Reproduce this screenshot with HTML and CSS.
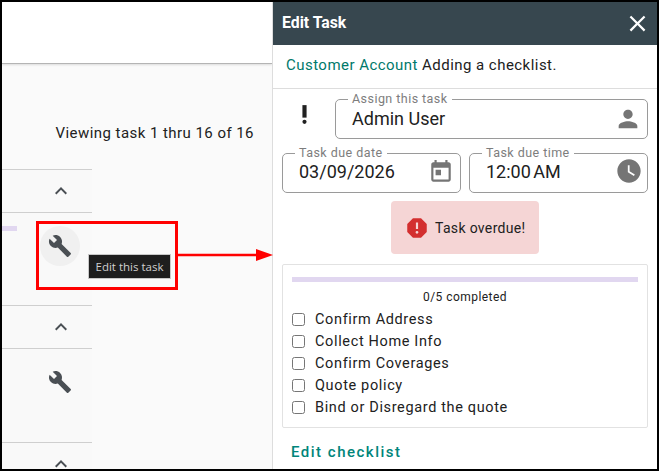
FILE: index.html
```html
<!DOCTYPE html>
<html lang="en">
<head>
<meta charset="utf-8">
<title>Edit Task</title>
<link rel="stylesheet" href="styles.css">
</head>
<body>
<div class="frame">
  <main class="main">
    <div class="topbar"></div>
    <p class="viewing">Viewing task 1 thru 16 of 16</p>
    <div class="tasks">
      <div class="row row-head">
        <svg class="icon chevron" viewBox="0 0 24 24"><path d="M12 8l-6 6 1.41 1.41L12 10.83l4.59 4.58L18 14z"/></svg>
      </div>
      <div class="row row-body">
        <span class="mini-progress"></span>
        <span class="wrench-btn is-hover">
          <svg class="icon wrench" viewBox="0 0 24 24"><path d="M22.7 19l-9.1-9.1c.9-2.3.4-5-1.5-6.9-2-2-5-2.4-7.4-1.3L9 6 6 9 1.6 4.7C.4 7.1.9 10.1 2.9 12.1c1.9 1.9 4.6 2.4 6.9 1.5l9.1 9.1c.4.4 1 .4 1.4 0l2.3-2.3c.5-.4.5-1.1.1-1.4z"/></svg>
        </span>
      </div>
      <div class="row row-head">
        <svg class="icon chevron" viewBox="0 0 24 24"><path d="M12 8l-6 6 1.41 1.41L12 10.83l4.59 4.58L18 14z"/></svg>
      </div>
      <div class="row row-body row-body-tall">
        <span class="wrench-btn">
          <svg class="icon wrench" viewBox="0 0 24 24"><path d="M22.7 19l-9.1-9.1c.9-2.3.4-5-1.5-6.9-2-2-5-2.4-7.4-1.3L9 6 6 9 1.6 4.7C.4 7.1.9 10.1 2.9 12.1c1.9 1.9 4.6 2.4 6.9 1.5l9.1 9.1c.4.4 1 .4 1.4 0l2.3-2.3c.5-.4.5-1.1.1-1.4z"/></svg>
        </span>
      </div>
      <div class="row row-head">
        <svg class="icon chevron" viewBox="0 0 24 24"><path d="M12 8l-6 6 1.41 1.41L12 10.83l4.59 4.58L18 14z"/></svg>
      </div>
    </div>
  </main>

  <aside class="panel">
    <header class="panel-head">
      <h1 class="panel-title">Edit Task</h1>
      <svg class="icon close" viewBox="0 0 24 24"><path d="M19 6.41L17.59 5 12 10.59 6.41 5 5 6.41 10.59 12 5 17.59 6.41 19 12 13.41 17.59 19 19 17.59 13.41 12z"/></svg>
    </header>
    <div class="subject"><span class="subject-link">Customer Account</span> Adding a checklist.</div>
    <div class="form">
      <div class="assign-row">
        <svg class="icon priority" viewBox="0 0 24 24"><circle cx="12" cy="19" r="2"/><path d="M10 3h4v12h-4z"/></svg>
        <fieldset class="field field-wide">
          <legend class="field-label">Assign this task</legend>
          <span class="field-value">Admin User</span>
          <svg class="icon field-icon person" viewBox="0 0 24 24"><path d="M12 12c2.21 0 4-1.79 4-4s-1.79-4-4-4-4 1.79-4 4 1.79 4 4 4zm0 2c-2.67 0-8 1.34-8 4v2h16v-2c0-2.66-5.33-4-8-4z"/></svg>
        </fieldset>
      </div>
      <div class="due-row">
        <fieldset class="field">
          <legend class="field-label">Task due date</legend>
          <span class="field-value">03/09/2026</span>
          <svg class="icon field-icon calendar" viewBox="0 0 24 24"><path d="M19 3h-1V1h-2v2H8V1H6v2H5c-1.11 0-1.99.9-1.99 2L3 19c0 1.1.89 2 2 2h14c1.1 0 2-.9 2-2V5c0-1.1-.9-2-2-2zm0 16H5V8h14v11zM7 10h5v5H7z"/></svg>
        </fieldset>
        <fieldset class="field">
          <legend class="field-label">Task due time</legend>
          <span class="field-value field-value-time">12:00 AM</span>
          <svg class="icon field-icon clock" viewBox="0 0 24 24"><path d="M12 2C6.5 2 2 6.5 2 12s4.5 10 10 10 10-4.5 10-10S17.5 2 12 2zm4.2 14.2L11 13V7h1.5v5.2l4.5 2.7-.8 1.3z"/></svg>
        </fieldset>
      </div>
      <div class="alert">
        <svg class="icon alert-icon" viewBox="0 0 24 24"><path d="M15.73 3H8.27L3 8.27v7.46L8.27 21h7.46L21 15.73V8.27L15.73 3zM12 17.3c-.72 0-1.3-.58-1.3-1.3 0-.72.58-1.3 1.3-1.3.72 0 1.3.58 1.3 1.3 0 .72-.58 1.3-1.3 1.3zm1-4.3h-2V7h2v6z"/></svg>
        <span>Task overdue!</span>
      </div>
      <section class="checklist">
        <div class="progress"></div>
        <div class="progress-text">0/5 completed</div>
        <label class="check"><input type="checkbox"><span>Confirm Address</span></label>
        <label class="check"><input type="checkbox"><span>Collect Home Info</span></label>
        <label class="check"><input type="checkbox"><span>Confirm Coverages</span></label>
        <label class="check"><input type="checkbox"><span>Quote policy</span></label>
        <label class="check"><input type="checkbox"><span>Bind or Disregard the quote</span></label>
      </section>
      <div class="edit-link">Edit checklist</div>
    </div>
  </aside>

  <div class="callout"></div>
  <div class="tooltip">Edit this task</div>
  <svg class="arrow" viewBox="0 0 95 12"><path d="M0 4.7h78V0l17 6-17 6V7.3H0z"/></svg>
</div>
</body>
</html>
```

FILE: styles.css
```css
* { box-sizing: border-box; }

html, body { margin: 0; padding: 0; }

body {
  width: 659px;
  height: 471px;
  overflow: hidden;
  font-family: Roboto, "Liberation Sans", sans-serif;
  color: #212121;
}

.frame {
  position: relative;
  display: flex;
  width: 659px;
  height: 471px;
  border: 2px solid #000;
  overflow: hidden;
  background: #fafafa;
}

.icon { display: block; flex: none; fill: currentColor; }

/* left page */
.main { flex: none; width: 270px; }

.topbar {
  height: 62px;
  background: #fff;
  border-bottom: 1px solid #b4b4b4;
  box-shadow: 0 1px 2px rgba(0, 0, 0, .12);
}

.viewing {
  margin: 0;
  padding: 59px 18px 0 0;
  height: 105px;
  text-align: right;
  font-size: 15px;
  line-height: 20px;
  letter-spacing: .45px;
}

.tasks { width: 90px; background: #f9f9f9; }

.row {
  position: relative;
  display: flex;
  justify-content: flex-end;
  border-top: 1px solid #cfcfcf;
  padding-right: 18px;
}

.row-head { height: 43px; align-items: center; color: #4a4f54; }

.row-body { height: 93px; padding-top: 13px; padding-right: 12px; color: #4a4f54; }
.row-body-tall { height: 94px; }

.chevron { width: 24px; height: 24px; margin-right: 1px; }

.wrench-btn {
  display: flex;
  align-items: center;
  justify-content: center;
  width: 40px;
  height: 40px;
  border-radius: 50%;
}

.is-hover { background: #f0f0f0; }

.wrench { width: 24px; height: 24px; margin: -1px 1px 0 0; }

.mini-progress {
  position: absolute;
  left: 0;
  top: 13px;
  width: 15px;
  height: 5px;
  background: #e1d7f0;
}

/* right panel */
.panel {
  flex: none;
  width: 385px;
  background: #fff;
  border-left: 1px solid #ddd;
}

.panel-head {
  display: flex;
  align-items: center;
  justify-content: space-between;
  height: 43px;
  padding: 0 6px 0 9px;
  background: #37474f;
  color: #fff;
}

.panel-title { margin: 0 0 2px; font-size: 15.8px; font-weight: 700; line-height: 20px; }

.close { width: 27px; height: 27px; }

.subject {
  height: 44px;
  padding: 10px 0 0 13px;
  border-bottom: 1px solid #ddd;
  font-size: 15px;
  line-height: 20px;
  letter-spacing: .46px;
}

.subject-link { color: #00796b; }

.form { padding: 3px 9px 0; }

.assign-row {
  display: flex;
  align-items: flex-end;
  height: 47px;
}

.priority { width: 25px; height: 25px; margin: 0 18px 12px 10px; color: #212121; }

.field {
  position: relative;
  flex: 1 1 0;
  min-width: 0;
  display: flex;
  align-items: center;
  height: 46px;
  margin: 0;
  padding: 0 0 6px 16px;
  border: 1px solid #9a9a9a;
  border-radius: 5px;
}

.field-label {
  margin-left: -4px;
  padding: 0 4px;
  font-size: 12.5px;
  line-height: 12px;
  letter-spacing: .45px;
  color: #7d7d7d;
}

.field-value { font-size: 18px; line-height: 24px; color: #212121; }

.field-value-time { word-spacing: -2px; }

.field-icon { position: absolute; color: #757575; }

.person { right: 5px; top: 0; width: 28px; height: 28px; }
.calendar { right: 6px; top: 0; width: 26px; height: 26px; }
.clock { right: 4px; top: -2px; width: 28px; height: 28px; }

.due-row {
  display: grid;
  grid-template-columns: 179px 179px;
  gap: 8px;
  margin-top: 8px;
}

.due-row .field { padding-bottom: 8px; }

.alert {
  display: flex;
  align-items: center;
  gap: 5px;
  width: 148px;
  height: 53px;
  margin: 8px auto 0;
  padding-left: 13px;
  border-radius: 4px;
  background: #f5d5d5;
  font-size: 14px;
  letter-spacing: .33px;
}

.alert-icon { width: 26px; height: 26px; margin-right: 0; color: #d32f2f; }

.checklist {
  height: 164px;
  margin-top: 10px;
  padding: 12px 9px 0;
  border: 1px solid #e2e2e2;
  border-radius: 2px;
}

.progress { height: 5px; background: #e1d7f0; }

.progress-text {
  margin-top: 7px;
  height: 19px;
  text-align: center;
  font-size: 12px;
  line-height: 17px;
  letter-spacing: .45px;
}

.check {
  display: flex;
  align-items: center;
  gap: 10px;
  height: 22px;
  font-size: 14.5px;
  letter-spacing: .64px;
}

.check input { flex: none; width: 13px; height: 13px; margin: 1px 0 0; }

.edit-link {
  margin: 14px 0 0 9px;
  font-size: 15px;
  font-weight: 500;
  line-height: 20px;
  letter-spacing: 1.5px;
  color: #00857a;
}

/* annotations laid over the screenshot */
.callout {
  position: absolute;
  left: 34px;
  top: 219px;
  width: 142px;
  height: 69px;
  border: 3px solid #f00;
}

.tooltip {
  position: absolute;
  left: 86px;
  top: 252px;
  width: 83px;
  height: 25px;
  border: 1px solid #c8c8c8;
  background: #1e1e1e;
  color: #d0d0d0;
  font-family: "Open Sans", sans-serif;
  font-size: 11.5px;
  line-height: 23px;
  text-align: center;
}

.arrow {
  position: absolute;
  left: 176px;
  top: 247px;
  width: 95px;
  height: 12px;
  fill: #f00;
}
```
